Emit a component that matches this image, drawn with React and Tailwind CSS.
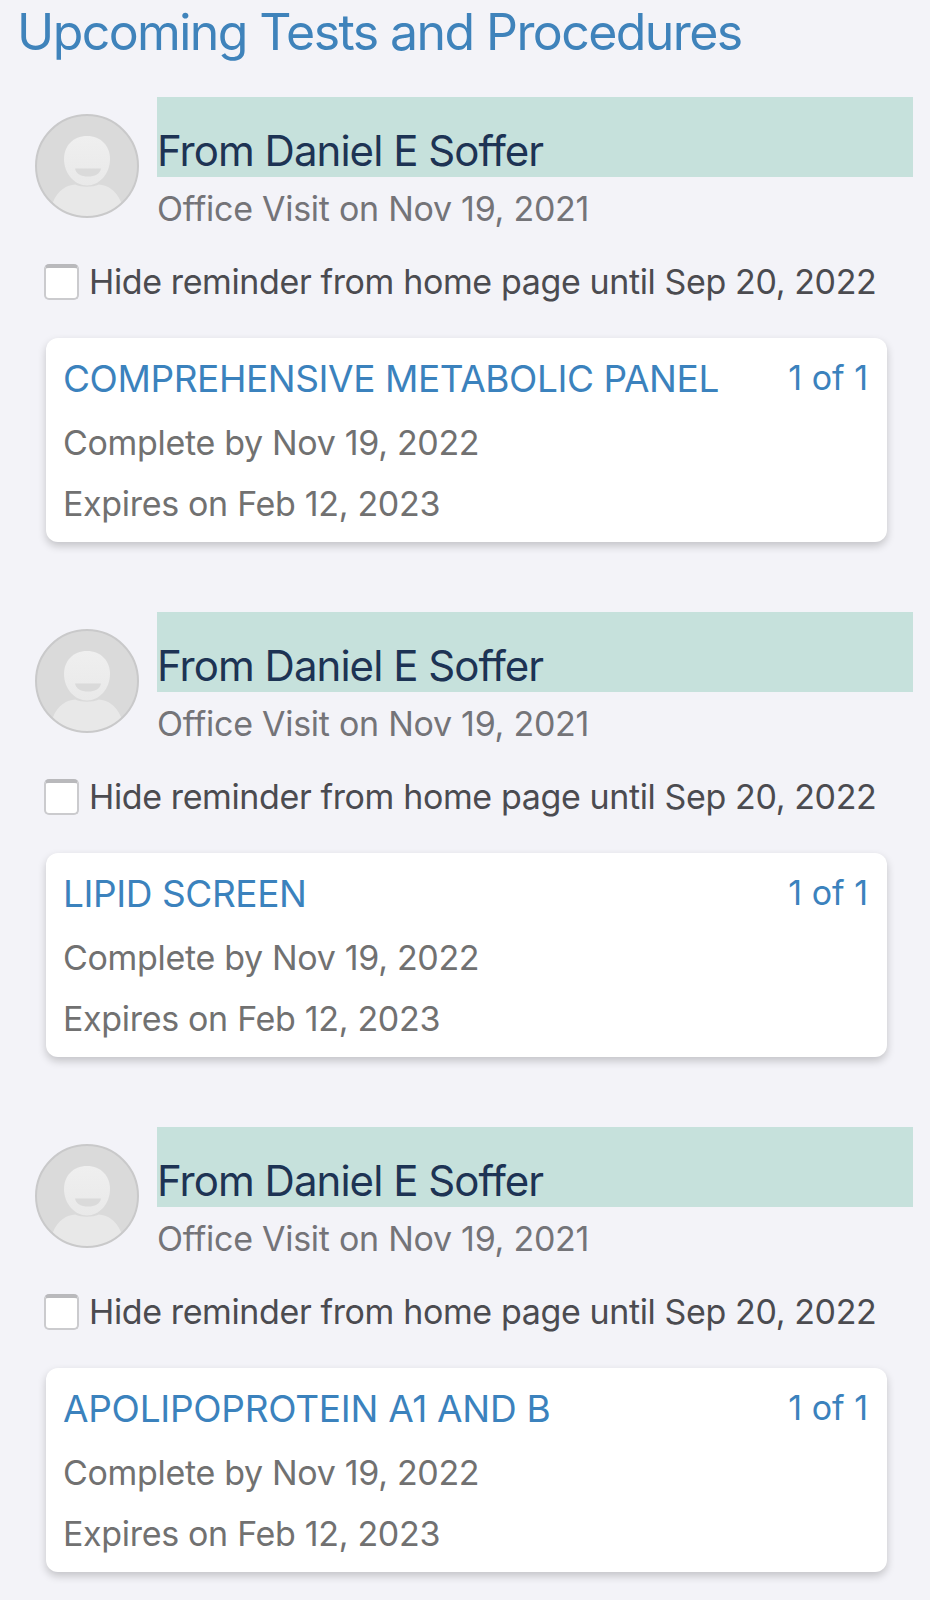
import React from "react";

const reminders = [
  { id: 1, test: "COMPREHENSIVE METABOLIC PANEL", spacing: "tracking-[-0.42px]" },
  { id: 2, test: "LIPID SCREEN", spacing: "tracking-[-0.42px]" },
  { id: 3, test: "APOLIPOPROTEIN A1 AND B", spacing: "tracking-[-0.27px]" },
];

const Avatar = () => {
  return (
    <svg viewBox="0 0 104 104" className="w-[104px] h-[104px] shrink-0">
      <defs>
        <clipPath id="avatar-clip">
          <circle cx="52" cy="52" r="51" />
        </clipPath>
        <linearGradient id="avatar-face" x1="0" y1="0" x2="0" y2="1">
          <stop offset="0" stopColor="#efefef" />
          <stop offset="1" stopColor="#e9e9e9" />
        </linearGradient>
      </defs>
      <circle cx="52" cy="52" r="51" fill="#dadada" />
      <g clipPath="url(#avatar-clip)">
        <path
          d="M18 88 C23 76 32 71 40 70.5 C47 73.5 57 73.5 64 70.5 C72 71 81 76 86 88 L86 104 L18 104 Z"
          fill="#e8e8e8"
        />
        <path
          d="M52 22 C66 22 75 32 75 45 C75 60 64 71.5 52 71.5 C40 71.5 29 60 29 45 C29 32 38 22 52 22 Z"
          fill="url(#avatar-face)"
        />
        <path d="M40 54.5 H66 C65 60 60 62.5 53 62.5 C46 62.5 41 60 40 54.5 Z" fill="#dadada" />
      </g>
      <circle cx="52" cy="52" r="51" fill="none" stroke="#c9c9ca" strokeWidth="2" />
    </svg>
  );
};

const Reminder = ({ test, spacing }) => {
  return (
    <section className="h-[515px]">
      <div className="flex">
        <div className="pt-[17px] pl-[35px] w-[157px] shrink-0">
          <Avatar />
        </div>
        <div className="w-[756px] shrink-0">
          <h2 className="h-20 pt-7 bg-[#c6e1dc] text-[#1d3354] text-[42px] leading-[52px] tracking-[-0.97px] whitespace-nowrap">
            From Daniel E Soffer
          </h2>
          <p className="mt-[9px] text-[#747478] text-[34px] leading-[46px] tracking-[-0.27px] whitespace-nowrap">
            Office Visit on Nov 19, 2021
          </p>
        </div>
      </div>
      <label className="mt-[27px] pl-11 flex items-start gap-2.5 text-[#4b4b50] text-[34px] leading-[46px] tracking-[-0.38px] whitespace-nowrap">
        <span className="mt-[5px] w-[35px] h-9 shrink-0 rounded-[5px] border-2 border-t-4 border-[#cbcbce] border-t-[#b9b9bc] bg-white" />
        <span>Hide reminder from home page until Sep 20, 2022</span>
      </label>
      <div className="mt-[33px] ml-[46px] w-[841px] h-[204px] pt-[15px] pl-[17px] pr-[19px] rounded-xl bg-white shadow-[0_4px_8px_rgba(0,0,0,0.2)] text-[34px] text-[#717171] tracking-[-0.32px] whitespace-nowrap">
        <div className="flex justify-between text-[#3b82bd]">
          <h3 className={`text-[37px] leading-[52px] ${spacing}`}>{test}</h3>
          <span className="leading-[50px] tracking-normal">1 of 1</span>
        </div>
        <p className="mt-[15px] leading-[46px]">Complete by Nov 19, 2022</p>
        <p className="mt-[15px] leading-[46px]">Expires on Feb 12, 2023</p>
      </div>
    </section>
  );
};

const App = () => {
  return (
    <main className="w-[930px] h-[1600px] overflow-hidden bg-[#f3f3f8] font-['Inter',sans-serif]">
      <h1 className="pt-0.5 pl-[17px] h-[97px] text-[50px] leading-[60px] tracking-[-1.58px] text-[#3f83bb] whitespace-nowrap">
        Upcoming Tests and Procedures
      </h1>
      {reminders.map((item) => (
        <Reminder key={item.id} test={item.test} spacing={item.spacing} />
      ))}
    </main>
  );
};

export default App;
